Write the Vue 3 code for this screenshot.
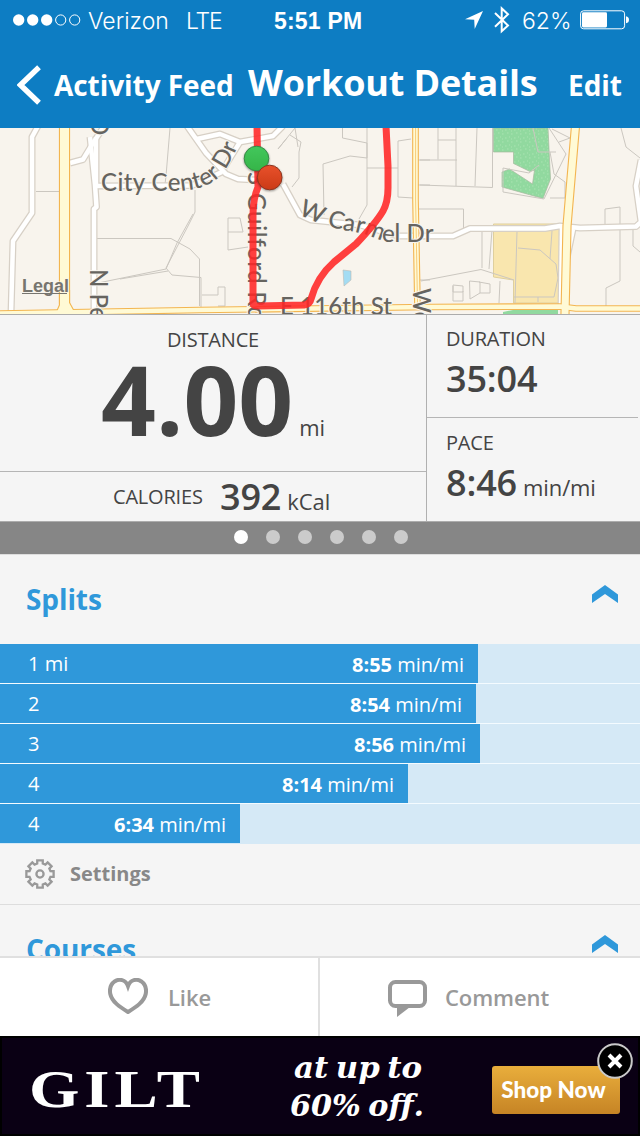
<template>
    <div class="page">
        <!-- status bar -->
        <header class="top">
            <div class="status">
                <svg class="signal" width="68" height="14" viewBox="0 0 68 14">
                    <circle v-for="n in 5" :key="n" :cx="n * 14 - 8.3" cy="7" :r="n > 3 ? 5.1 : 5.7"
                        :fill="n > 3 ? 'none' : '#fff'" :stroke="n > 3 ? '#fff' : 'none'" stroke-width="1" />
                </svg>
                <span class="carrier">Verizon</span>
                <span class="network">LTE</span>
                <span class="clock">5:51 PM</span>
                <svg class="locate" width="18" height="18" viewBox="0 0 18 18">
                    <path d="M18 0L9.7 18L9.2 8.8L0 8.2Z" fill="#fff" />
                </svg>
                <svg class="bluetooth" width="16" height="28" viewBox="0 0 16 28">
                    <path d="M1 7L14 19.5L7.7 25.2V2.4L14 8.2L1 20.7" fill="none" stroke="#fff" stroke-width="2" />
                </svg>
                <span class="percent">62%</span>
                <svg class="battery" width="50" height="20" viewBox="0 0 50 20">
                    <rect x=".6" y=".8" width="44" height="18" rx="3" fill="none" stroke="#fff" />
                    <rect x="2" y="2.2" width="25" height="15.2" rx="1.3" fill="#fff" />
                    <path d="M46 6.3Q49 6.8 49 9.8T46 13.3Z" fill="#fff" />
                </svg>
            </div>
            <nav class="nav">
                <svg class="back" width="24" height="40" viewBox="0 0 24 40">
                    <path d="M22 2.3L3.5 20L22 37.7" fill="none" stroke="#fff" stroke-width="5.4" />
                </svg>
                <span class="nav-link feed">Activity Feed</span>
                <h1 class="title">Workout Details</h1>
                <span class="nav-link edit">Edit</span>
            </nav>
        </header>

        <!-- route map -->
        <svg class="map" width="640" height="186" viewBox="0 128 640 186">
            <defs>
                <path id="cityCenter" d="M101 191H178Q208 190 222 174Q233 160 241 138" />
                <path id="carmel" d="M298 214Q326 228 350 231Q366 234 377 239Q383 242 392 242H440" />
                <linearGradient id="greenPin" x1="0" y1="0" x2="0" y2="1">
                    <stop offset="0" stop-color="#43c75c" />
                    <stop offset="1" stop-color="#35b548" />
                </linearGradient>
                <linearGradient id="redPin" x1="0" y1="0" x2="0" y2="1">
                    <stop offset="0" stop-color="#e8512b" />
                    <stop offset="1" stop-color="#cb3a16" />
                </linearGradient>
                <pattern id="grass" width="9" height="8" patternUnits="userSpaceOnUse">
                    <rect width="9" height="8" fill="#91d99f" />
                    <path d="M1 2h1.5M5 1h1M3 5h1.5M7 6h1.5M7 3h1" stroke="#b0e6b7" stroke-width=".8" />
                </pattern>
            </defs>
            <rect y="128" width="640" height="186" fill="#f8f4ed" />
            <path d="M493.5 128H548L550.5 179L543 198.5L502 187V172L509.5 169L532.5 184L534.5 170L530 171.5L513.5 163.5V152H493.5Z"
                fill="url(#grass)" stroke="#a6b99f" stroke-width=".7" />
            <path d="M493.5 224H561V303H513.5V280L493.5 277Z" fill="#f9e6ae" stroke="#dfcf9d" />
            <path d="M503 312L513 310H558V314H503Z" fill="#91d99f" />
            <path d="M343 270L351 271V280L344 286Z" fill="#a3dcf3" stroke="#bcbab3" stroke-width=".6" />
            <!-- lot lines -->
            <g fill="none" stroke="#cbc7c0" stroke-width="1">
                <path v-for="d in lots" :key="d" :d="d" />
            </g>
            <g fill="none" stroke-linejoin="round">
                <path v-for="d in streets" :key="d" :d="d" stroke="#d7d0c6" stroke-width="7" />
                <path v-for="d in streets" :key="'w' + d" :d="d" stroke="#fff" stroke-width="4.5" />
                <path v-for="r in avenues" :key="r.d" :d="r.d" stroke="#f3b550" :stroke-width="r.w + 2.2" />
                <path v-for="r in avenues" :key="'y' + r.d" :d="r.d" stroke="#fffad5" :stroke-width="r.w" />
            </g>
            <path d="M415.6 128V200L417.5 304" fill="none" stroke="#f8ca78" stroke-width="1" />
            <g class="street-name">
                <text><textPath href="#cityCenter" textLength="158">City Center Dr</textPath></text>
                <text><textPath href="#carmel" textLength="140">W Carmel Dr</textPath></text>
                <text transform="translate(248 172) rotate(90)">S</text>
                <text transform="translate(248 193) rotate(90)" textLength="127">Guilford Rd</text>
                <text transform="translate(89.5 269) rotate(90)">N Pe</text>
                <text transform="translate(90.5 116) rotate(90)">O</text>
                <text transform="translate(413 288) rotate(90)">We</text>
                <text x="280" y="315" textLength="112">E 116th St</text>
            </g>
            <text class="legal" x="22" y="292" textLength="47">Legal</text>
            <path d="M22 293.5H67" stroke="#77756f" stroke-width="1" />
            <path class="route" d="M257 126L258 187Q253 199 253 214V303Q253 306 258 306L304 305Q310 304 311 299Q317 277 334 262L356 244Q376 223 383 211Q388 202 388 188V166L386 126" />
            <g class="pins">
                <circle cx="256.5" cy="158.5" r="12.3" fill="url(#greenPin)" stroke="#368846" />
                <circle cx="269.7" cy="177.5" r="12.3" fill="url(#redPin)" stroke="#8c3520" />
            </g>
        </svg>

        <!-- stats -->
        <section class="stats">
            <div class="stats-main">
                <div class="distance">
                    <div class="label">DISTANCE</div>
                    <div class="distance-value">4.00<span class="unit">mi</span></div>
                </div>
                <div class="calories">
                    <span class="label">CALORIES</span>
                    <span class="value">392<span class="unit">kCal</span></span>
                </div>
            </div>
            <div class="stats-side">
                <div class="side-cell">
                    <div class="label">DURATION</div>
                    <div class="value">35:04</div>
                </div>
                <div class="side-cell">
                    <div class="label">PACE</div>
                    <div class="value">8:46<span class="unit">min/mi</span></div>
                </div>
            </div>
        </section>
        <div class="pager">
            <i v-for="n in 6" :key="n" class="dot" :class="{ active: n === 1 }"></i>
        </div>

        <main class="sections">
            <section>
                <div class="section-head">
                    <h2>Splits</h2>
                    <svg width="26" height="18" viewBox="0 0 26 18">
                        <path d="M0 9.5L13 0L26 9.5V18L13 9L0 18Z" fill="#2f98da" />
                    </svg>
                </div>
                <div v-for="(split, i) in splits" :key="i" class="split">
                    <div class="bar" :style="{ width: split.width + 'px' }">
                        <span class="bar-label">{{ split.label }}</span>
                        <span class="bar-pace"><b>{{ split.pace }}</b> min/mi</span>
                    </div>
                </div>
                <div class="settings">
                    <svg width="30" height="30" viewBox="-15 -15 30 30" fill="none" stroke="#999" stroke-width="2.3">
                        <path :d="gear" />
                        <circle r="3.6" />
                    </svg>
                    <span>Settings</span>
                </div>
            </section>
            <section>
                <div class="section-head">
                    <h2>Courses</h2>
                    <svg width="26" height="18" viewBox="0 0 26 18">
                        <path d="M0 9.5L13 0L26 9.5V18L13 9L0 18Z" fill="#2f98da" />
                    </svg>
                </div>
            </section>
        </main>

        <footer class="actions">
            <div class="action like">
                <svg width="40" height="36" viewBox="0 0 40 36">
                    <path d="M20 8C17.5 1 11 .8 7 3.2C3 6 1.3 11 2.3 16C4 24 12 29 20 34C28 29 36 24 37.7 16C38.7 11 37 6 33 3.2C29 .8 22.5 1 20 8Z"
                        fill="none" stroke="#999" stroke-width="4" />
                </svg>
                <span>Like</span>
            </div>
            <div class="action comment">
                <svg width="39" height="37" viewBox="0 0 39 37">
                    <rect x="2" y="2" width="35" height="24" rx="5.5" fill="none" stroke="#999" stroke-width="4" />
                    <path d="M9 27H22L9 37Z" fill="#999" />
                </svg>
                <span>Comment</span>
            </div>
        </footer>

        <!-- ad banner -->
        <aside class="ad">
            <svg class="gilt" width="174" height="60" viewBox="0 0 174 60">
                <text x="-1" y="44.5" textLength="176" lengthAdjust="spacingAndGlyphs">GILT</text>
            </svg>
            <svg class="offer" width="140" height="96" viewBox="0 0 140 96">
                <text x="4" y="40" textLength="128" lengthAdjust="spacingAndGlyphs">at up to</text>
                <text x="0" y="78" textLength="134" lengthAdjust="spacingAndGlyphs">60% off.</text>
            </svg>
            <div class="shop">Shop Now</div>
            <svg class="close" width="38" height="38" viewBox="0 0 38 38">
                <circle cx="19" cy="19" r="16.8" fill="#000" stroke="#c9c9c9" stroke-width="2" />
                <path d="M13 13L25 25M25 13L13 25" stroke="#fff" stroke-width="4" />
            </svg>
        </aside>
    </div>
</template>

<script setup>
const splits = [
    { label: '1 mi', pace: '8:55', width: 478 },
    { label: '2', pace: '8:54', width: 476 },
    { label: '3', pace: '8:56', width: 480 },
    { label: '4', pace: '8:14', width: 408 },
    { label: '4', pace: '6:34', width: 240 }
];

const streets = [
    'M38 126L32 137V213L13 241L11 314',
    'M70 163L83 159.5L93 143L103 128',
    'M90 137L95 185L96.5 207L94 209V314',
    'M96 137V187',
    'M95 186L192 185.5L222 172',
    'M187 126L206 153L226 174L238 179L258 180',
    'M197 139L220 134L240 142L273 136L283 126',
    'M240 142L224 168',
    'M283 184L300 215L311 220L360 225L398 236H453L470 228.5H545L560 226L580 228L636 226.5L641 222L636 186L641 160',
    'M562 228L561 310',
    'M573 229L567 258'
];

const avenues = [
    { d: 'M64.5 126V306L61 314', w: 9 },
    { d: 'M64.5 290V304L70 314', w: 9 },
    { d: 'M415.5 126V200L417.5 307', w: 4.5 },
    { d: 'M575.5 126L567 226L565 314', w: 7 },
    { d: 'M0 313.5L200 310L430 307L560 306.5L576 308.5H640', w: 4.5 }
];

const lots = [
    'M36 191.5H59',
    'M170 128L166 176L165 184',
    'M195 190V212L188 226L166 268L172 275L201 277.5V307',
    'M97 238.5H171L190 249L199.5 259V306',
    'M98 283L166 269L177 243L193 214',
    'M120 279L168 271',
    'M202 295H218V287H225V306H218',
    'M298 147L295 128L278 149L287 138M290 135L301 142L299 152V178L292 187',
    'M342.5 128V138L367 143V158L350 156L323 164L324 215',
    'M367 128V205L359 219',
    'M367 168H398V141L411 139M398 168V197L413 198',
    'M228 250V218L240 218L243 232H228M228 250L248 247',
    'M418 160H430M418 185H430M418 209H463.5V228M418 280H430',
    'M438 128V159.5M438 140H456M456 128V186M477 128L475 186M420 160H457M420 185L492.5 187.5V128',
    'M482 230V268M492 230L489 269',
    'M421 281L481 269.5L514 280',
    'M453 285L463 286V292H453ZM453 286V301H463V291M469.5 281L480 282V293L470 299ZM479 282L490 284V293H480',
    'M500 281L499 303M517 231L515 303M518 248L540 250L556 264L558 278L554 297M552 231L550 259',
    'M514 297H554M538 297V302',
    'M533 128L538 152H556M539 165L529 173L503 168V192L544 199L566 154L549 128',
    'M552 129L570 138L559 142M550 198H565V182L554 174L550 152',
    'M621 128L626 147L640 158',
    'M605 227V209L620 207V281L606 288V306',
    'M633 230V246L640 252'
];

// outline of the settings cog, eight square teeth
const teeth = 8;
const gearPoints = [];
for (let i = 0; i < teeth; i++) {
    const a = (i * 2 * Math.PI) / teeth - Math.PI / 2;
    const corners = [[10.8, -0.26], [13.9, -0.2], [13.9, 0.2], [10.8, 0.26]];
    corners.forEach(([r, o]) => {
        gearPoints.push(`${(r * Math.cos(a + o)).toFixed(2)} ${(r * Math.sin(a + o)).toFixed(2)}`);
    });
}
const gear = `M${gearPoints.join('L')}Z`;
</script>

<style>
body {
    margin: 0;
}
</style>

<style scoped>
.page {
    width: 640px;
    height: 1136px;
    display: flex;
    flex-direction: column;
    overflow: hidden;
    background: #f5f5f5;
    color: #444;
    font-family: "Open Sans", "Noto Sans", sans-serif;
    white-space: nowrap;
}

svg {
    display: block;
    flex: none;
}

.top {
    height: 128px;
    flex: none;
    background: #0d7dc3;
    color: #fff;
}

.status {
    display: flex;
    align-items: center;
    height: 40px;
    padding-left: 13px;
    font: 300 23px/40px Inter, "Liberation Sans", sans-serif;
}

.status span {
    padding-top: 2px;
}

.carrier {
    width: 98px;
    margin-left: 7px;
}

.network {
    width: 88px;
    letter-spacing: -1.2px;
}

.clock {
    width: 191px;
    font-family: "Liberation Sans", sans-serif;
    font-weight: 700;
    letter-spacing: 0.2px;
}

.bluetooth {
    margin-left: 11px;
}

.percent {
    width: 50px;
    margin: 0 8px 0 12px;
}

.nav {
    display: flex;
    align-items: baseline;
    height: 88px;
    box-sizing: border-box;
    padding: 23px 0 0 17px;
}

.back {
    align-self: flex-start;
    margin-top: 2px;
}

.nav-link {
    font-size: 28px;
    font-weight: 700;
    line-height: 40px;
    letter-spacing: -0.05px;
}

.feed {
    width: 181px;
    margin-left: 13px;
}

.title {
    width: 291px;
    margin: 0 0 0 13px;
    font-size: 36px;
    line-height: 40px;
    letter-spacing: -0.15px;
}

.edit {
    margin-left: 29px;
}

.map {
    border-bottom: 1px solid #acacac;
}

.street-name {
    font: 500 24px Lato, sans-serif;
    fill: #66645f;
    stroke: #f8f4ed;
    stroke-width: 2px;
    paint-order: stroke;
}

.legal {
    font: 700 18px "Liberation Sans", sans-serif;
    fill: #77756f;
    stroke: #f8f4ed;
    stroke-width: 1px;
    paint-order: stroke;
}

.route {
    fill: none;
    stroke: #ff2626;
    stroke-opacity: .88;
    stroke-width: 7px;
}

.pins {
    filter: drop-shadow(0 1px 1px rgba(0, 0, 0, .4));
}

.stats {
    display: flex;
    height: 206px;
    flex: none;
    border-bottom: 1px solid #acacac;
}

.stats-main {
    width: 426px;
    border-right: 1px solid #b0b0b0;
}

.distance {
    height: 156px;
    box-sizing: border-box;
    padding-top: 12px;
    text-align: center;
}

.label {
    font-size: 20px;
    line-height: 26px;
    letter-spacing: -0.2px;
}

.distance-value {
    margin-top: -4px;
    font-size: 96px;
    font-weight: 700;
    line-height: 99px;
}

.unit {
    margin-left: 6px;
    font-size: 22px;
    font-weight: 400;
    letter-spacing: -0.1px;
}

.calories {
    display: flex;
    align-items: center;
    height: 50px;
    box-sizing: border-box;
    padding-left: 113px;
    border-top: 1px solid #b5b5b5;
}

.calories .label {
    width: 107px;
}

.calories .value {
    padding-top: 4px;
}

.value {
    font-size: 36px;
    font-weight: 600;
    line-height: 44px;
    letter-spacing: -0.15px;
}

.stats-side {
    flex: 1;
    padding-right: 2px;
}

.side-cell {
    height: 102px;
    box-sizing: border-box;
    padding: 11px 0 0 19px;
}

.side-cell + .side-cell {
    height: 104px;
    padding-top: 12px;
    border-top: 1px solid #b5b5b5;
}

.side-cell .value {
    margin-top: 5px;
}

.pager {
    display: flex;
    align-items: center;
    justify-content: center;
    gap: 18px;
    height: 32px;
    flex: none;
    box-sizing: border-box;
    padding: 0 0 2px 2px;
    background: #868686;
}

.dot {
    width: 14px;
    height: 14px;
    border-radius: 50%;
    background: #cbcbcb;
}

.dot.active {
    background: #fff;
}

.sections {
    height: 402px;
    flex: none;
    overflow: hidden;
}

.section-head {
    display: flex;
    align-items: flex-start;
    justify-content: space-between;
    height: 90px;
    box-sizing: border-box;
    padding: 24px 22px 0 26px;
    border-top: 1px solid #ddd;
}

.section-head svg {
    margin-top: 6px;
}

h2 {
    margin: 0;
    color: #2f98da;
    font-size: 28px;
    font-weight: 700;
    line-height: 40px;
    letter-spacing: -0.1px;
}

.split {
    height: 39px;
    border-bottom: 1px solid #f4fbff;
    background: #d5e9f6;
}

.split:nth-last-child(2) {
    border-bottom-color: #d5e9f6;
}

.bar {
    display: flex;
    justify-content: space-between;
    height: 39px;
    box-sizing: border-box;
    padding: 0 14px 0 28px;
    background: #2f98da;
    color: #fff;
    font-size: 20px;
    line-height: 39px;
}

.bar-pace {
    line-height: 41px;
}

.settings {
    display: flex;
    align-items: center;
    gap: 15px;
    height: 60px;
    padding-left: 25px;
    color: #888;
    font-size: 20px;
    font-weight: 700;
}

.settings span {
    padding-bottom: 2px;
}

.actions {
    display: flex;
    height: 80px;
    flex: none;
    box-sizing: border-box;
    border-top: 2px solid #e0e0e0;
    background: #fff;
    color: #999;
    font-size: 22px;
    font-weight: 600;
    line-height: 79px;
    letter-spacing: -0.1px;
}

.action {
    display: flex;
    width: 320px;
    box-sizing: border-box;
}

.like {
    gap: 20px;
    padding-left: 108px;
    border-right: 2px solid #e0e0e0;
}

.like svg {
    margin-top: 20px;
}

.comment {
    gap: 18px;
    padding-left: 68px;
}

.comment svg {
    margin-top: 22px;
}

.ad {
    position: relative;
    display: flex;
    height: 100px;
    flex: none;
    box-sizing: border-box;
    border: 2px solid #000;
    background: #0a0014;
}

.gilt {
    margin: 24px 0 0 28px;
    font: 700 52px "Liberation Serif", serif;
    letter-spacing: 4px;
    fill: #fff;
}

.offer {
    margin-left: 86px;
    font: italic 700 29px "DejaVu Serif", serif;
    word-spacing: -3px;
    fill: #fff;
}

.shop {
    width: 128px;
    height: 48px;
    box-sizing: border-box;
    padding-right: 5px;
    margin: 28px 0 0 62px;
    border-radius: 3px;
    background: linear-gradient(#e9ae3c, #c68425);
    color: #fff;
    font: 900 22.5px/47px Lato, sans-serif;
    text-align: center;
}

.close {
    position: absolute;
    top: 4px;
    right: 4px;
}
</style>
